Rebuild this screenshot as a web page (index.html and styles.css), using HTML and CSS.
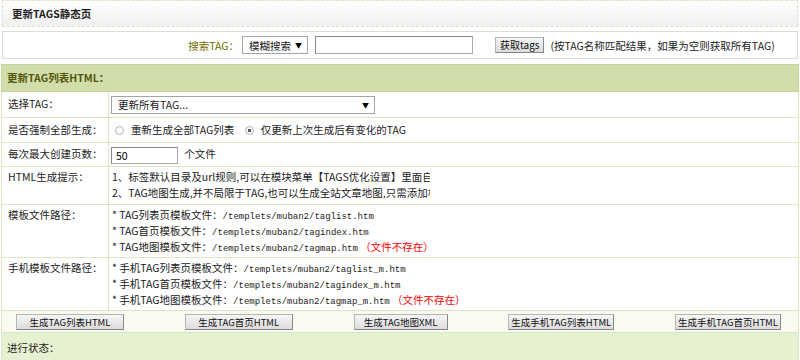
FILE: index.html
```html
<!DOCTYPE html>
<html lang="zh-CN">
<head>
  <meta charset="UTF-8" />
  <meta name="viewport" content="width=device-width, initial-scale=1.0"/>
  <title>更新TAGS静态页</title>
  <link rel="stylesheet" href="styles.css">
</head>
<body>

  <div class="page-title">更新TAGS静态页</div>

  <div class="search-bar">
    <span class="search-label">搜索TAG：</span>
    <span class="fake-select search-type">模糊搜索<span class="arrow">▼</span></span>
    <input type="text" class="text-input search-input">
    <button class="btn search-btn">获取tags</button>
    <span class="search-tip">(按TAG名称匹配结果，如果为空则获取所有TAG)</span>
  </div>

  <table class="main-table">
    <tr>
      <td colspan="2" class="table-head">更新TAG列表HTML：</td>
    </tr>
    <tr>
      <td class="label">选择TAG：</td>
      <td><span class="fake-select tag-select">更新所有TAG...<span class="arrow">▼</span></span></td>
    </tr>
    <tr>
      <td class="label">是否强制全部生成：</td>
      <td>
        <span class="radio"></span><span class="radio-text">重新生成全部TAG列表</span>
        <span class="radio checked"></span><span class="radio-text">仅更新上次生成后有变化的TAG</span>
      </td>
    </tr>
    <tr class="row-tight">
      <td class="label">每次最大创建页数：</td>
      <td><input type="text" class="text-input page-input" value="50"> 个文件</td>
    </tr>
    <tr class="row-lines">
      <td class="label">HTML生成提示：</td>
      <td>
        <div class="tips">
          1、标签默认目录及url规则,可以在模块菜单【TAGS优化设置】里面自定义设置<br>
          2、TAG地图生成,并不局限于TAG,也可以生成全站文章地图,只需添加相应的标签即可
        </div>
      </td>
    </tr>
    <tr class="row-lines">
      <td class="label">模板文件路径：</td>
      <td>
        * TAG列表页模板文件：<span class="path">/templets/muban2/taglist.htm</span><br>
        * TAG首页模板文件：<span class="path">/templets/muban2/tagindex.htm</span><br>
        * TAG地图模板文件：<span class="path">/templets/muban2/tagmap.htm</span> <span class="missing">（文件不存在）</span>
      </td>
    </tr>
    <tr class="row-lines">
      <td class="label">手机模板文件路径：</td>
      <td>
        * 手机TAG列表页模板文件：<span class="path">/templets/muban2/taglist_m.htm</span><br>
        * 手机TAG首页模板文件：<span class="path">/templets/muban2/tagindex_m.htm</span><br>
        * 手机TAG地图模板文件：<span class="path">/templets/muban2/tagmap_m.htm</span> <span class="missing">（文件不存在）</span>
      </td>
    </tr>
    <tr class="btn-row">
      <td colspan="2">
        <div class="btn-list">
          <button class="btn btn-wide">生成TAG列表HTML</button>
          <button class="btn btn-wide">生成TAG首页HTML</button>
          <button class="btn btn-mid">生成TAG地图XML</button>
          <button class="btn">生成手机TAG列表HTML</button>
          <button class="btn">生成手机TAG首页HTML</button>
        </div>
      </td>
    </tr>
    <tr class="status-row">
      <td colspan="2">进行状态：</td>
    </tr>
  </table>

</body>
</html>
```

FILE: styles.css
```css
body {
  margin: 0;
  font-family: "Noto Sans CJK SC", sans-serif;
  font-size: 10.5px;
  color: #222;
  background: #fff;
}

.page-title {
  margin: 0 2px;
  height: 25px;
  line-height: 25px;
  padding-left: 9px;
  border: 1px dashed #dfe3c6;
  background: linear-gradient(#fff, #f0f0f0);
  font-weight: bold;
}

.search-bar {
  display: flex;
  align-items: center;
  margin: 4px 2px 0;
  height: 26px;
  border: 1px solid #dcdcdc;
  background: #fff;
}

.search-label {
  width: 236px;
  text-align: right;
  color: #6e6a00;
  margin-right: 3px;
}

.fake-select {
  display: inline-flex;
  align-items: center;
  justify-content: space-between;
  box-sizing: border-box;
  height: 18px;
  padding: 0 5px 0 6px;
  border: 1px solid #a5a5a5;
  background: #fff;
  vertical-align: middle;
}

.arrow {
  font-size: 7px;
  color: #000;
}

.search-type {
  width: 66px;
}

.tag-select {
  width: 264px;
}

.text-input {
  box-sizing: border-box;
  border: 1px solid #a9a9a9;
  border-top-color: #888;
  border-left-color: #888;
  font-family: inherit;
  font-size: 10.5px;
  padding: 0 4px;
  outline: none;
}

.search-input {
  width: 158px;
  height: 18px;
  margin-left: 7px;
}

.btn {
  box-sizing: border-box;
  height: 16px;
  padding: 0 2px;
  font-family: inherit;
  font-size: 9.5px;
  line-height: 14px;
  color: #111;
  border: 1px solid #b5b5b5;
  border-right-color: #888;
  border-bottom-color: #888;
  background: linear-gradient(#f6f6f6, #dcdcdc);
  cursor: pointer;
}

.search-btn {
  margin-left: 22px;
  padding: 0 4px;
  font-size: 10px;
}

.search-tip {
  margin-left: 6px;
}

.main-table {
  width: calc(100% - 2px);
  margin: 5px 1px 0;
  border-collapse: collapse;
  border: 1px solid #d3ddb0;
}

.main-table td {
  border: 1px solid #dde6c4;
  padding: 3px 2px;
  line-height: 18px;
  vertical-align: top;
  white-space: nowrap;
}

.main-table td.table-head {
  background: #d2ddac;
  border-color: #c9d59f;
  color: #55550a;
  font-weight: bold;
  padding: 4px 5px;
}

.main-table td.label {
  width: 96px;
  padding-left: 6px;
  padding-right: 4px;
}

.radio {
  display: inline-block;
  box-sizing: border-box;
  width: 9px;
  height: 9px;
  margin: 0 7px 0 4px;
  border: 1px solid #b8b8b8;
  border-radius: 50%;
  background: radial-gradient(#fff 40%, #e4e4e4);
  vertical-align: -1px;
}

.radio.checked {
  background: radial-gradient(#555 28%, #fff 36%, #e4e4e4);
}

.radio-text {
  margin-right: 4px;
}

.row-tight td {
  padding-top: 2px;
  padding-bottom: 2px;
}

.page-input {
  width: 67px;
  height: 17px;
  margin-right: 4px;
  vertical-align: middle;
}

.row-lines td {
  padding-top: 2px;
  padding-bottom: 2px;
  padding-left: 3px;
  line-height: 16px;
}

.tips {
  width: 318px;
  line-height: 16.5px;
  overflow: hidden;
}

.path {
  font-family: "Liberation Mono", monospace;
  font-size: 9px;
  line-height: 1;
}

.missing {
  color: #f00;
  line-height: 1;
}

.main-table .btn-row td {
  background: #f9fbf0;
  padding: 3px 17px 2px 14px;
}

.btn-list {
  display: flex;
  justify-content: space-between;
}

.btn-wide {
  width: 108px;
}

.btn-mid {
  width: 94px;
}

.main-table .status-row td {
  background: #e5f1d0;
  height: 24px;
  padding: 6px 5px;
}
```
